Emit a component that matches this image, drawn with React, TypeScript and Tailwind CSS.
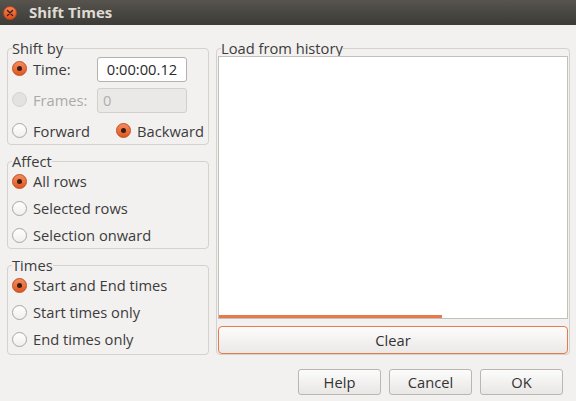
import React from "react";

function Radio({ checked, disabled }: { checked?: boolean; disabled?: boolean }) {
  if (disabled)
    return <span className="block w-[15px] h-[15px] rounded-full border border-[#d6d3ce] bg-[#e4e2df] shrink-0" />;
  if (checked)
    return (
      <span className="flex w-[15px] h-[15px] rounded-full border border-[#c24c19] bg-gradient-to-b from-[#f38b5f] to-[#df561e] items-center justify-center shrink-0">
        <span className="block w-[5px] h-[5px] rounded-full bg-[#3a1d12]" />
      </span>
    );
  return <span className="block w-[15px] h-[15px] rounded-full border border-[#aaa6a0] bg-gradient-to-b from-white to-[#f0efed] shrink-0" />;
}

function Option({ label, checked }: { label: string; checked?: boolean }) {
  return (
    <div className="flex items-center h-[24px] gap-[6px]">
      <Radio checked={checked} />
      <span>{label}</span>
    </div>
  );
}

function Btn({ label }: { label: string }) {
  return (
    <button className="w-[83px] h-[26px] rounded-[3px] border border-[#bab6b0] bg-gradient-to-b from-[#fcfcfc] to-[#e9e7e5] text-[#333] text-[14.7px] leading-none">
      {label}
    </button>
  );
}

export default function App() {
  return (
    <div className="w-[576px] h-[401px] bg-[#f2f1f0] flex flex-col font-['Open_Sans',_sans-serif] text-[14.7px] text-[#3c3c3c] overflow-hidden">
      {/* Title bar */}
      <div className="h-[25px] shrink-0 bg-gradient-to-b from-[#57544e] to-[#3c3b37] flex items-center">
        <span className="ml-[3px] w-[14px] h-[14px] rounded-full border border-[#b8461a] bg-gradient-to-b from-[#f3814f] to-[#de5019] flex items-center justify-center">
          <svg width="8" height="8" viewBox="0 0 8 8">
            <path d="M1.5 1.5 L6.5 6.5 M6.5 1.5 L1.5 6.5" stroke="#3b1a0e" strokeWidth="1.3" strokeLinecap="round" />
          </svg>
        </span>
        <span className="ml-[12px] text-[15px] font-bold text-[#dfdbd2] leading-none">Shift Times</span>
      </div>

      {/* Body */}
      <div className="flex pt-[15px] pl-[7px] pr-[6px] gap-[7px]">
        <div className="w-[202px] flex flex-col gap-2">
          <fieldset className="border border-[#d5d2cd] rounded-[4px] px-[4px] min-w-0">
            <legend className="leading-[16px]">Shift by</legend>
            <div className="flex flex-col gap-[5px]">
              <div className="flex items-center h-[26px]">
                <div className="w-[85px] flex items-center gap-[6px]">
                  <Radio checked />
                  <span>Time:</span>
                </div>
                <div className="w-[90px] h-[25px] rounded-[3px] border border-[#b5b1ab] bg-white flex items-center justify-center text-[#2a2a2a] leading-none">
                  0:00:00.12
                </div>
              </div>
              <div className="flex items-center h-[26px]">
                <div className="w-[85px] flex items-center gap-[6px]">
                  <Radio disabled />
                  <span className="text-[#acaaa6]">Frames:</span>
                </div>
                <div className="w-[90px] h-[25px] rounded-[3px] border border-[#d3d0cb] bg-[#ebe9e7] flex items-center pl-[5px] text-[#b0aeaa] leading-none">
                  0
                </div>
              </div>
              <div className="flex items-center h-[26px]">
                <div className="w-[105px] flex items-center gap-[6px]">
                  <Radio />
                  <span>Forward</span>
                </div>
                <div className="flex items-center gap-[6px]">
                  <Radio checked />
                  <span>Backward</span>
                </div>
              </div>
            </div>
          </fieldset>

          <fieldset className="border border-[#d5d2cd] rounded-[4px] px-[4px] pb-[1px] min-w-0">
            <legend className="leading-[16px]">Affect</legend>
            <div className="flex flex-col gap-[3px]">
              <Option label="All rows" checked />
              <Option label="Selected rows" />
              <Option label="Selection onward" />
            </div>
          </fieldset>

          <fieldset className="border border-[#d5d2cd] rounded-[4px] px-[4px] pb-[3px] min-w-0">
            <legend className="leading-[16px]">Times</legend>
            <div className="flex flex-col gap-[3px]">
              <Option label="Start and End times" checked />
              <Option label="Start times only" />
              <Option label="End times only" />
            </div>
          </fieldset>
        </div>

        <fieldset className="w-[354px] border border-[#d5d2cd] rounded-[4px] px-[1px] min-w-0 flex flex-col">
          <legend className="leading-[16px] ml-[3px]">Load from history</legend>
          <div className="flex-1 border border-[#c3bfb9] bg-white flex flex-col">
            <div className="flex-1" />
            <div className="w-[223px] h-[3px] bg-[#e9784a]" />
          </div>
          <button className="mt-[7px] h-[28px] rounded-[4px] border border-[#e67a4c] bg-gradient-to-b from-[#fdfcfc] to-[#ebe9e7] text-[#333] text-[14.7px] leading-none">
            Clear
          </button>
        </fieldset>
      </div>

      {/* Bottom buttons */}
      <div className="flex justify-end gap-[8px] pr-[13px] mt-[14px]">
        <Btn label="Help" />
        <Btn label="Cancel" />
        <Btn label="OK" />
      </div>
    </div>
  );
}
